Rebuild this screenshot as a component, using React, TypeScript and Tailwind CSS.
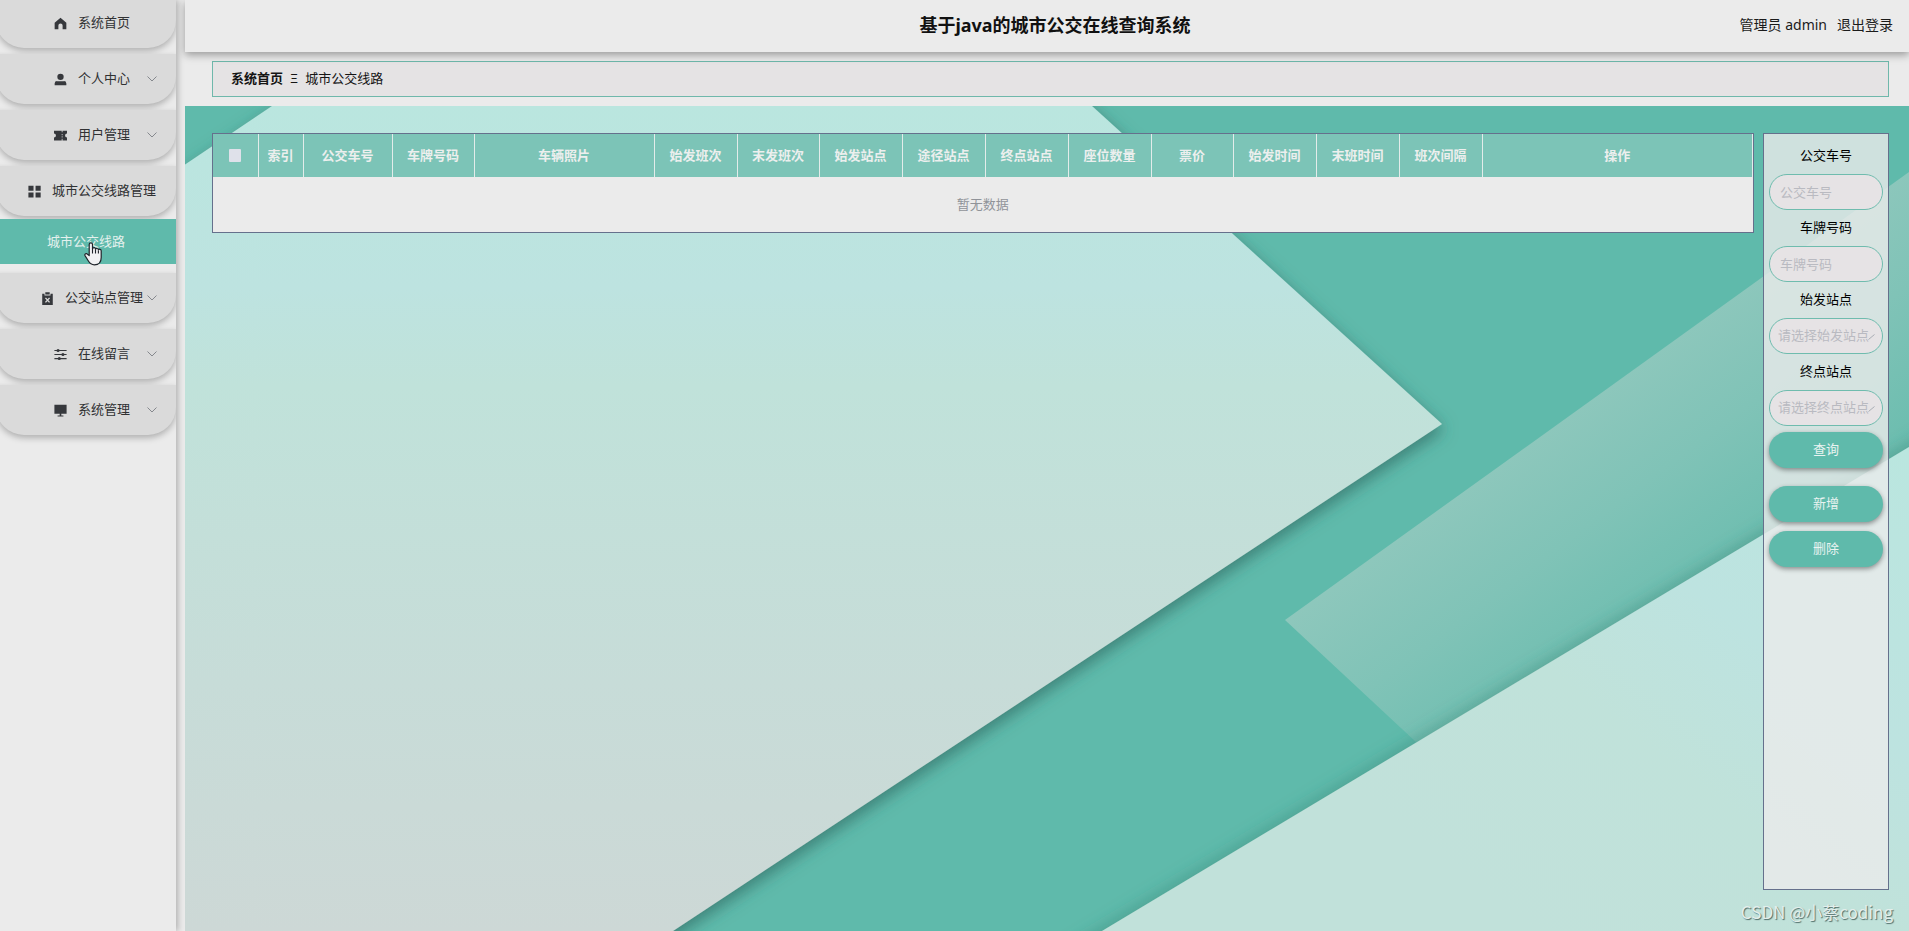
import { useState } from "react";
import type { ReactNode } from "react";

type MenuItem = {
  label: string;
  icon: ReactNode;
  arrow?: boolean;
  children?: string[];
};

const menus: MenuItem[] = [
  {
    label: "系统首页",
    icon: <path d="M8 1 .8 7v8h4.600v-4.500a2.600 2.600 0 0 1 5.200 0V15h4.600V7z" />,
  },
  {
    label: "个人中心",
    arrow: true,
    icon: (
      <>
        <circle cx="8" cy="4.7" r="3.9" />
        <path d="M.8 15v-2.2A3 3 0 0 1 3.8 10h8.4a3 3 0 0 1 3 2.8V15z" />
      </>
    ),
  },
  {
    label: "用户管理",
    arrow: true,
    icon: (
      <path d="M0 2h9.5v2h1V2H16v3.6a2.4 2.4 0 0 0 0 4.8V14h-5.5v-2h-1v2H0v-3.6a2.4 2.4 0 0 0 0-4.8zm9.5 4v1.6h1V6zm0 3v1.6h1V9z" />
    ),
  },
  {
    label: "城市公交线路管理",
    icon: <path d="M.5 1h6.3v6H.5zM9.3 1h6.3v6H9.3zM.5 9.3h6.3v6H.5zM9.3 9.3h6.3v6H9.3z" />,
    children: ["城市公交线路"],
  },
  {
    label: "公交站点管理",
    arrow: true,
    icon: (
      <>
        <path d="M1.5 2.2h2.8v2h7.4v-2h2.8V16h-13z" />
        <path d="M5.3.3h5.4v2.8H5.3z" />
        <path d="m5.5 7.2 5 5.6m0-5.6-5 5.6" stroke="#dadada" strokeWidth="1.7" />
      </>
    ),
  },
  {
    label: "在线留言",
    arrow: true,
    icon: (
      <>
        <path d="M.5 2.4h15v1.3H.5zM.5 7.4h15v1.3H.5zM.5 12.4h15v1.3H.5z" />
        <circle cx="5" cy="3" r="1.9" />
        <circle cx="11" cy="8" r="1.9" />
        <circle cx="6.5" cy="13" r="1.9" />
      </>
    ),
  },
  {
    label: "系统管理",
    arrow: true,
    icon: <path d="M.5 1h15v11H.5zM7 12h2v2h2.6v1.4H4.4V14H7z" />,
  },
];

const columns = [
  { title: "索引", width: "w-[45px]" },
  { title: "公交车号", width: "w-[89px]" },
  { title: "车牌号码", width: "w-[82px]" },
  { title: "车辆照片", width: "w-[180px]" },
  { title: "始发班次", width: "w-[83px]" },
  { title: "末发班次", width: "w-[82px]" },
  { title: "始发站点", width: "w-[83px]" },
  { title: "途径站点", width: "w-[83px]" },
  { title: "终点站点", width: "w-[83px]" },
  { title: "座位数量", width: "w-[83px]" },
  { title: "票价", width: "w-[82px]" },
  { title: "始发时间", width: "w-[83px]" },
  { title: "末班时间", width: "w-[83px]" },
  { title: "班次间隔", width: "w-[83px]" },
  { title: "操作", width: "" },
];

const fieldClass =
  "block h-9 w-full appearance-none rounded-full border border-[#6fbcae] bg-[#e6e3e5] text-[13px] outline-none";

function HandCursor() {
  return (
    <svg viewBox="0 0 18 24" className="pointer-events-none absolute top-[23px] left-[84px] h-6 w-[18px]">
      <path
        d="M5.2 13.6V2.6a1.6 1.6 0 0 1 3.3 0V7a1.5 1.5 0 0 1 3 .4 1.5 1.5 0 0 1 2.9.6 1.5 1.5 0 0 1 2.8.8v6.7c0 4.6-2.4 7.3-6.8 7.3-3 0-4.6-1.2-6-3.8L1 13.6c-.7-1.6 1.3-2.7 2.5-1.4z"
        fill="#f1f1f3"
        stroke="#20242a"
        strokeWidth="1.2"
        strokeLinejoin="round"
      />
      <path d="M8.5 7v4.5M11.5 7.8v3.7M14.4 8.5v3" stroke="#20242a" strokeWidth="1.1" />
    </svg>
  );
}

function Sidebar() {
  return (
    <aside className="z-10 w-44 shrink-0 bg-[#ebebeb] shadow-[2px_0_6px_rgba(0,0,0,0.25)]">
      <nav className="-mt-0.5 flex flex-col gap-1.5 overflow-hidden pb-5">
        {menus.map((item) => (
          <div key={item.label}>
            <button
              type="button"
              className="relative -ml-1 flex h-[50px] w-[180px] items-center justify-center gap-[11px] rounded-b-[28px] bg-[#dadada] pl-3 text-[13px] text-[#303133] shadow-[0_3px_6px_rgba(0,0,0,0.25)]"
            >
              <svg viewBox="0 0 16 16" className="size-[13px] shrink-0 fill-[#36383c]">
                {item.icon}
              </svg>
              <span className="whitespace-nowrap">{item.label}</span>
              {item.arrow && (
                <svg viewBox="0 0 10 6" className="absolute top-[22px] right-[19px] h-1.5 w-2.5 fill-none stroke-[#85888d]">
                  <path d="m.5.5 4.5 4.5L9.5.5" />
                </svg>
              )}
            </button>
            {item.children?.map((child) => (
              <div key={child} className="relative my-[3px]">
                <a
                  href="#lines"
                  className="flex h-[45px] items-center justify-center bg-[#5fbaab] pr-1 text-[13px] text-[#e4f1ee]"
                >
                  {child}
                </a>
                <HandCursor />
              </div>
            ))}
          </div>
        ))}
      </nav>
    </aside>
  );
}

// Folded paper backdrop behind the table and the search panel
function Backdrop() {
  return (
    <svg viewBox="0 0 1724 825" preserveAspectRatio="none" className="absolute inset-0 h-full w-full">
      <defs>
        <linearGradient id="sheet" gradientUnits="userSpaceOnUse" x1="0" y1="0" x2="0" y2="825">
          <stop offset="0" stopColor="#bae6df" />
          <stop offset="0.22" stopColor="#bde3e0" />
          <stop offset="0.34" stopColor="#c0e2da" />
          <stop offset="0.7" stopColor="#c7dcd8" />
          <stop offset="1" stopColor="#cdd8d6" />
        </linearGradient>
        <linearGradient id="ribbon" gradientUnits="userSpaceOnUse" x1="1300" y1="340" x2="1450" y2="540">
          <stop offset="0" stopColor="#90c8bd" />
          <stop offset="0.5" stopColor="#80c3b7" />
          <stop offset="1" stopColor="#6cbdaf" />
        </linearGradient>
        <linearGradient id="corner" gradientUnits="userSpaceOnUse" x1="1724" y1="340" x2="1350" y2="825">
          <stop offset="0" stopColor="#bae6df" />
          <stop offset="0.4" stopColor="#bde3e0" />
          <stop offset="0.65" stopColor="#c0e2da" />
          <stop offset="1" stopColor="#c1e1da" />
        </linearGradient>
        <filter id="fold" x="-5%" y="-5%" width="110%" height="110%">
          <feDropShadow dx="2" dy="6" stdDeviation="8" floodColor="#2a655b" floodOpacity="0.65" />
        </filter>
        <filter id="edge" x="-5%" y="-5%" width="110%" height="110%">
          <feDropShadow dx="-2" dy="-3" stdDeviation="8" floodColor="#2d7d70" floodOpacity="0.4" />
        </filter>
      </defs>
      <rect width="1724" height="825" fill="#5fbaab" />
      <path d="M1100 514 1724 66V400L1231 636z" fill="url(#ribbon)" />
      <path d="M917 825 1724 341 1800 295V900H792z" fill="url(#corner)" filter="url(#edge)" />
      <path d="M87 0-60 99V900H374L488 825 1257 318 907 0 850-52H163z" fill="url(#sheet)" filter="url(#fold)" />
    </svg>
  );
}

function BusTable() {
  return (
    <div className="min-w-0 flex-1 self-start border border-[#65708c] bg-[#ebebeb]">
      <table className="w-full table-fixed border-collapse text-[13px]">
        <thead>
          <tr className="h-[43px] bg-[#7cc4b7] text-[#ecefee]">
            <th className="w-[45px] border-r border-[#e3ecea]">
              <input
                type="checkbox"
                aria-label="全选"
                className="mx-auto block h-[13px] w-3 appearance-none rounded-[1px] bg-[#dfe1ea]"
              />
            </th>
            {columns.map((col) => (
              <th key={col.title} className={`${col.width} border-r border-[#e3ecea] p-0 text-center font-bold whitespace-nowrap`}>
                {col.title}
              </th>
            ))}
          </tr>
        </thead>
        <tbody>
          <tr className="h-[55px]">
            <td colSpan={16} className="text-center text-[#909399]">
              暂无数据
            </td>
          </tr>
        </tbody>
      </table>
    </div>
  );
}

function StationSelect({ id, label }: { id: string; label: string }) {
  return (
    <div>
      <label htmlFor={id} className="flex h-9 items-center justify-center text-[13px] text-black">
        {label}
      </label>
      <div className="relative">
        <select id={id} defaultValue="" className={`${fieldClass} pl-2 text-[#b9bac1]`}>
          <option value="">请选择{label}</option>
        </select>
        <svg viewBox="0 0 7 6" className="pointer-events-none absolute top-4 right-2 h-1.5 w-[7px] fill-none stroke-[#a9adb5]">
          <path d="m.5 5.5 6-5" />
        </svg>
      </div>
    </div>
  );
}

function SearchPanel() {
  const [busNo, setBusNo] = useState("");
  const [plate, setPlate] = useState("");

  const buttonClass =
    "h-9 w-full rounded-full bg-[#5fbaab] text-[13px] text-[#e9f3f1] shadow-[0_2px_5px_rgba(0,0,0,0.4)]";

  return (
    <form
      className="flex w-[126px] shrink-0 flex-col border border-[#65708c] bg-[#ebebeb]/80 px-[5px] pt-1"
      onSubmit={(e) => e.preventDefault()}
    >
      <label htmlFor="busNo" className="flex h-9 items-center justify-center text-[13px] text-black">
        公交车号
      </label>
      <input
        id="busNo"
        value={busNo}
        onChange={(e) => setBusNo(e.target.value)}
        placeholder="公交车号"
        className={`${fieldClass} px-2.5 placeholder:text-[#b9bac1]`}
      />
      <label htmlFor="plate" className="flex h-9 items-center justify-center text-[13px] text-black">
        车牌号码
      </label>
      <input
        id="plate"
        value={plate}
        onChange={(e) => setPlate(e.target.value)}
        placeholder="车牌号码"
        className={`${fieldClass} px-2.5 placeholder:text-[#b9bac1]`}
      />
      <StationSelect id="start" label="始发站点" />
      <StationSelect id="end" label="终点站点" />
      <div className="mt-1.5 mb-[18px]">
        <button type="submit" className={buttonClass}>查询</button>
      </div>
      <div className="flex flex-col gap-[9px]">
        <button type="button" className={buttonClass}>新增</button>
        <button type="button" className={buttonClass}>删除</button>
      </div>
    </form>
  );
}

export default function App() {
  return (
    <div className="flex min-h-screen gap-[9px] bg-[#ebebeb] font-['Noto_Sans','Noto_Sans_CJK_SC',sans-serif]">
      <Sidebar />

      <div className="flex min-w-0 flex-1 flex-col">
        {/* 顶部栏 */}
        <header className="z-10 grid h-[52px] grid-cols-[1fr_auto_1fr] items-center bg-[#ebebeb] pr-4 pb-0.5 pl-8 shadow-[0_3px_8px_rgba(0,0,0,0.35)]">
          <h1 className="col-start-2 text-[18px] font-bold text-[#111]">基于java的城市公交在线查询系统</h1>
          <div className="flex justify-end gap-2.5 text-sm text-[#1b1b1b]">
            <span>管理员 admin</span>
            <button type="button">退出登录</button>
          </div>
        </header>

        {/* 面包屑 */}
        <div className="bg-[#ebebeb] py-[9px] pr-5 pl-[27px]">
          <div className="flex h-9 items-center gap-[7px] border border-[#6fb8ab] bg-[#e5e3e4] px-[18px] text-[13px] text-[#151515]">
            <a href="#home" className="font-bold">系统首页</a>
            <span>Ξ</span>
            <span>城市公交线路</span>
          </div>
        </div>

        <main className="relative flex flex-1 overflow-hidden">
          <Backdrop />
          <div className="relative flex min-w-0 flex-1 gap-[9px] pt-[27px] pr-5 pb-[41px] pl-[27px]">
            <BusTable />
            <SearchPanel />
          </div>
          <span className="absolute right-4 bottom-[7px] font-['Noto_Sans_CJK_SC',sans-serif] text-[17px] text-[#e3eeeb] [text-shadow:1px_1px_1px_#4d6a66]">
            CSDN @小蔡coding
          </span>
        </main>
      </div>
    </div>
  );
}
